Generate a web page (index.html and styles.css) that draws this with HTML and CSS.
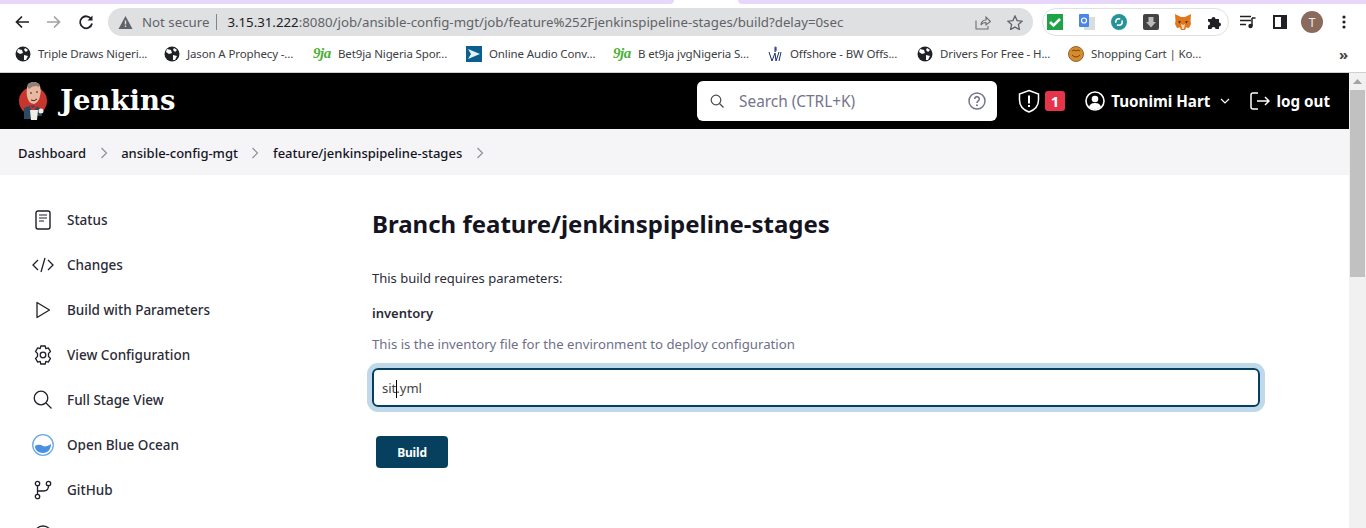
FILE: index.html
```html
<!DOCTYPE html>
<html lang="en">
<head>
<meta charset="UTF-8">
<meta name="viewport" content="width=device-width, initial-scale=1.0">
<title>Jenkins - Build feature/jenkinspipeline-stages</title>
<link rel="stylesheet" href="styles.css">
</head>
<body>

<!-- browser chrome -->
<div class="tabstrip"><div class="tabstrip-left"></div><div class="tabstrip-right"></div></div>

<div class="toolbar">
    <div class="nav-buttons">
        <svg width="16" height="16" viewBox="0 0 16 16"><path d="M15 8H2.500M8 2.500L2.500 8 8 13.500" fill="none" stroke="#202124" stroke-width="1.700"/></svg>
        <svg width="16" height="16" viewBox="0 0 16 16"><path d="M1 8h12.500M8 2.500L13.500 8 8 13.500" fill="none" stroke="#a0a1a3" stroke-width="1.700"/></svg>
        <svg width="16" height="16" viewBox="0 0 16 16"><path d="M13.300 5.200A6 6 0 1 0 14 9.500" fill="none" stroke="#202124" stroke-width="1.800"/><path d="M14.500 1.500v5h-5z" fill="#202124"/></svg>
    </div>
    <div class="omnibox">
        <svg class="warn" width="15" height="13" viewBox="0 0 14 13"><path d="M7 0l7 13H0z" fill="#5f6368"/><path d="M6.300 4.500h1.400v4H6.300zM6.300 9.500h1.400v1.400H6.300z" fill="#dedfe0"/></svg>
        <span class="not-secure">Not secure</span>
        <span class="omni-sep"></span>
        <span class="url"><b>3.15.31.222</b>:8080/job/ansible-config-mgt/job/feature%252Fjenkinspipeline-stages/build?delay=0sec</span>
        <svg class="share" width="16" height="15" viewBox="0 0 16 15"><path d="M1 5.500V14h12v-3M6 10c0-3 2-5 5-5V2l4.500 4.500L11 10V7.500c-2 0-4 .5-5 2.500z" fill="none" stroke="#6a6d70" stroke-width="1.100"/></svg>
        <svg class="star" width="16" height="15" viewBox="0 0 16 15"><path d="M8 1l2.100 4.600 5 .6-3.700 3.400 1 4.900L8 12.100l-4.400 2.400 1-4.900L.9 6.200l5-.6z" fill="none" stroke="#5f6368" stroke-width="1.300"/></svg>
    </div>
    <div class="extensions">
        <svg width="16" height="16" viewBox="0 0 16 16"><rect width="16" height="16" fill="#1ea446"/><path d="M3 8l3.500 3.500L13 5" fill="none" stroke="#fff" stroke-width="2.600"/></svg>
        <svg width="16" height="16" viewBox="0 0 16 16"><rect x="5" y="3" width="11" height="13" fill="#d9dde0"/><rect width="10" height="13" rx="1" fill="#4a86e8"/><circle cx="5" cy="6.500" r="2.500" fill="none" stroke="#fff" stroke-width="1.200"/></svg>
        <svg width="16" height="16" viewBox="0 0 16 16"><circle cx="8" cy="8" r="8" fill="#26929a"/><circle cx="8" cy="8" r="3.200" fill="none" stroke="#fff" stroke-width="1.600" stroke-dasharray="7 2"/></svg>
        <svg width="16" height="16" viewBox="0 0 16 16"><rect width="16" height="16" rx="2" fill="#444"/><path d="M5.500 3h5v5H13l-5 5.500L3 8h2.500z" fill="#bbb"/></svg>
        <svg width="16" height="16" viewBox="0 0 16 16"><path d="M0 0l6 3h4l6-3-.500 7 .500 3-2 4-3-.5-1 2.500H6l-1-2.500-3 .5-2-4 .500-3z" fill="#e2761b"/><path d="M6 10l2 1 2-1-1 5H7z" fill="#f6d7b8"/><path d="M3 7l3 .5-1.500 2zM13 7l-3 .5 1.500 2z" fill="#233447"/></svg>
        <svg width="16" height="16" viewBox="0 0 16 16"><path d="M1 5h3.500a2 2 0 1 1 4 0H12v3.500a2 2 0 1 1 0 4V15H8.500a2 2 0 1 0-4 0H1v-3.500a2 2 0 1 0 0-4z" fill="#202124"/></svg>
    </div>
    <div class="toolbar-right">
        <svg width="16" height="14" viewBox="0 0 16 14"><path d="M0 1.500h11M0 5.500h11M0 9.500h6" stroke="#202124" stroke-width="1.400"/><path d="M12 3v8" stroke="#202124" stroke-width="1.500"/><path d="M12 3h3.500" stroke="#202124" stroke-width="1.500"/><circle cx="10.500" cy="11" r="2.200" fill="#202124"/></svg>
        <svg class="side-toggle" width="14" height="14" viewBox="0 0 14 14"><path d="M0 0h14v14H0zM2 2v10h6V2z" fill="#202124" fill-rule="evenodd"/></svg>
        <span class="avatar">T</span>
        <svg width="4" height="14" viewBox="0 0 4 14"><circle cx="2" cy="2" r="1.600" fill="#202124"/><circle cx="2" cy="7" r="1.600" fill="#202124"/><circle cx="2" cy="12" r="1.600" fill="#202124"/></svg>
    </div>
</div>

<div class="bookmarks">
    <a class="bookmark bm-149"><svg width="16" height="16" viewBox="0 0 16 16"><use href="#globe"/></svg>Triple Draws Nigeri...</a>
    <a class="bookmark bm-149"><svg width="16" height="16" viewBox="0 0 16 16"><use href="#globe"/></svg>Jason A Prophecy -...</a>
    <a class="bookmark bm-153"><span class="ninja">9ja</span>Bet9ja Nigeria Spor...</a>
    <a class="bookmark bm-147"><svg width="16" height="16" viewBox="0 0 16 16"><rect width="16" height="16" fill="#0b5f8e"/><path d="M2 3l12 5-12 5 3-5z" fill="#e6f1f7"/></svg>Online Audio Conv...</a>
    <a class="bookmark bm-154"><span class="ninja">9ja</span>B et9ja jvgNigeria S...</a>
    <a class="bookmark bm-150"><svg width="16" height="16" viewBox="0 0 16 16"><path d="M2 6l3 9 3-8 1 8 3-9M14 6l-2 9M8 1v5M8 1c2 0 2 2 0 2c2 0 2 2 0 2" fill="none" stroke="#1c2f72" stroke-width="1"/></svg>Offshore - BW Offs...</a>
    <a class="bookmark bm-151"><svg width="16" height="16" viewBox="0 0 16 16"><use href="#globe"/></svg>Drivers For Free - H...</a>
    <a class="bookmark"><svg width="16" height="16" viewBox="0 0 16 16"><circle cx="8" cy="8" r="7.500" fill="#d98a2b" stroke="#8a6a3a"/><path d="M4 5q2-2 4 0M8 5q2-2 4 0M4 9q4 4 8 0" fill="none" stroke="#6b4a1c"/></svg>Shopping Cart | Ko...</a>
    <span class="more">&raquo;</span>
</div>

<svg class="defs" width="0" height="0">
    <symbol id="globe" viewBox="0 0 16 16">
        <circle cx="8" cy="8" r="7.500" fill="#202124"/>
        <path d="M3 3l4 1 1 3-3 1-3-2zM9 9l4 1-2 4-2 0zM10 2l3 2-2 2-2-2z" fill="#fff"/>
    </symbol>
</svg>

<!-- page -->
<div class="window">
    <div class="page">
        <header class="jenkins-header">
            <a class="brand">
                <svg width="32" height="40" viewBox="0 0 32 40">
                    <circle cx="15" cy="20" r="14" fill="#c8352c"/>
                    <path d="M6 27q8-5 16 0l2 8H15l-2 3H6z" fill="#2d4a63"/>
                    <path d="M10 3q6-4 11 0q3 5 1 12q-1 6-6 8q-6-1-7-8q-1-6 1-12z" fill="#e8b9a0"/>
                    <path d="M10 3q6-4 11 0q1 2 0 3q-5-3-10 2q-2-1-1-5z" fill="#8f8079"/>
                    <path d="M11 24l4 3 4-3-3 6h-2z" fill="#d0312d"/>
                    <path d="M12 29h8l-1 10h-6z" fill="#f0ede6"/>
                    <circle cx="23" cy="30" r="2.500" fill="#f0ede6"/>
                    <path d="M12 12h2M18 11h2M13 19q3 2 6-1" stroke="#3a2a24" stroke-width="1" fill="none"/>
                </svg>
                <span class="brand-name">Jenkins</span>
            </a>
            <div class="search-box">
                <svg width="14" height="14" viewBox="0 0 14 14"><circle cx="6" cy="6" r="4.800" fill="none" stroke="#4a4a55" stroke-width="1.200"/><path d="M9.500 9.500L13.500 13.500" stroke="#4a4a55" stroke-width="1.200"/></svg>
                <span class="search-text">Search (CTRL+K)</span>
                <svg width="18" height="18" viewBox="0 0 18 18"><circle cx="9" cy="9" r="8" fill="none" stroke="#74748c" stroke-width="1.500"/><path d="M6.700 7a2.300 2.300 0 1 1 3.600 1.900c-.9.600-1.300 1-1.300 2" fill="none" stroke="#74748c" stroke-width="1.600"/><circle cx="9" cy="13.200" r="1" fill="#74748c"/></svg>
            </div>
            <div class="header-actions">
                <a class="alert">
                    <svg width="22" height="24" viewBox="0 0 22 24"><path d="M11 1.500l9.500 3.500v6c0 6-4 10-9.500 12C5.500 21 1.500 17 1.500 11V5z" fill="none" stroke="#fff" stroke-width="1.500"/><path d="M10 6.500h2v8h-2zM10 16h2v2h-2z" fill="#fff"/></svg>
                    <span class="badge">1</span>
                </a>
                <a class="user">
                    <svg width="20" height="20" viewBox="0 0 20 20"><circle cx="10" cy="10" r="9" fill="none" stroke="#fff" stroke-width="1.600"/><circle cx="10" cy="8" r="3.300" fill="#fff"/><path d="M4 16c1-3.500 3.500-4 6-4s5 .5 6 4c-3 3-9 3-12 0z" fill="#fff"/></svg>
                    <span>Tuonimi Hart</span>
                    <svg class="caret" width="10" height="6" viewBox="0 0 10 6"><path d="M1 1l4 4 4-4" fill="none" stroke="#fff" stroke-width="1.200"/></svg>
                </a>
                <a class="logout">
                    <svg width="20" height="18" viewBox="0 0 20 18"><path d="M8 1H3a2 2 0 0 0-2 2v12a2 2 0 0 0 2 2h5M7 9h12M15 5l4 4-4 4" fill="none" stroke="#fff" stroke-width="1.500"/></svg>
                    <span>log out</span>
                </a>
            </div>
        </header>

        <nav class="breadcrumbs">
            <a>Dashboard</a>
            <svg width="8" height="12" viewBox="0 0 8 12"><path d="M1.500 1l5 5-5 5" fill="none" stroke="#8a8a96" stroke-width="1.100"/></svg>
            <a>ansible-config-mgt</a>
            <svg width="8" height="12" viewBox="0 0 8 12"><path d="M1.500 1l5 5-5 5" fill="none" stroke="#8a8a96" stroke-width="1.100"/></svg>
            <a>feature/jenkinspipeline-stages</a>
            <svg width="8" height="12" viewBox="0 0 8 12"><path d="M1.500 1l5 5-5 5" fill="none" stroke="#8a8a96" stroke-width="1.100"/></svg>
        </nav>

        <div class="main">
            <aside class="side-panel">
                <a class="task"><span class="task-icon"><svg width="18" height="20" viewBox="0 0 18 20"><rect x="2" y="1" width="14" height="18" rx="2" fill="none" stroke="#1f1f2b" stroke-width="1.400"/><path d="M5 5h8M5 8h8M5 11h5" stroke="#1f1f2b" stroke-width="1.200"/></svg></span>Status</a>
                <a class="task"><span class="task-icon"><svg width="22" height="16" viewBox="0 0 22 16"><path d="M6 3L1 8l5 5M16 3l5 5-5 5M13 1L9 15" fill="none" stroke="#1f1f2b" stroke-width="1.300"/></svg></span>Changes</a>
                <a class="task"><span class="task-icon"><svg width="16" height="18" viewBox="0 0 16 18"><path d="M2 1.500l12.500 7.500L2 16.500z" fill="none" stroke="#1f1f2b" stroke-width="1.300" stroke-linejoin="round"/></svg></span>Build with Parameters</a>
                <a class="task"><span class="task-icon"><svg width="20" height="20" viewBox="0 0 20 20"><path d="M7.800 1h4.400l.6 2.600 2.500-.8 2.200 3.800-2 1.900v3l2 1.900-2.200 3.800-2.500-.8-.6 2.600H7.800l-.6-2.600-2.500.8-2.200-3.800 2-1.900v-3l-2-1.900 2.200-3.800 2.500.8z" fill="none" stroke="#1f1f2b" stroke-width="1.300" stroke-linejoin="round"/><circle cx="10" cy="10" r="2.800" fill="none" stroke="#1f1f2b" stroke-width="1.300"/></svg></span>View Configuration</a>
                <a class="task"><span class="task-icon"><svg width="19" height="19" viewBox="0 0 19 19"><circle cx="8" cy="8" r="6.800" fill="none" stroke="#1f1f2b" stroke-width="1.300"/><path d="M13 13l5.500 5.500" stroke="#1f1f2b" stroke-width="1.300"/></svg></span>Full Stage View</a>
                <a class="task"><span class="task-icon"><svg width="22" height="22" viewBox="0 0 22 22"><circle cx="11" cy="11" r="10.300" fill="#fff" stroke="#6aa8e8" stroke-width="1.300"/><path d="M3 12c3-2 6-1 8 0s5 0 8-2c0 5-3 9-8 9s-8-3-8-7z" fill="#4a90e0"/></svg></span>Open Blue Ocean</a>
                <a class="task"><span class="task-icon"><svg width="18" height="20" viewBox="0 0 18 20"><circle cx="3.500" cy="3.500" r="2.200" fill="none" stroke="#1f1f2b" stroke-width="1.300"/><circle cx="3.500" cy="16.500" r="2.200" fill="none" stroke="#1f1f2b" stroke-width="1.300"/><circle cx="14.500" cy="3.500" r="2.200" fill="none" stroke="#1f1f2b" stroke-width="1.300"/><path d="M3.500 5.700v8.600M3.500 11h6c3 0 5-1.500 5-5.300" fill="none" stroke="#1f1f2b" stroke-width="1.300"/></svg></span>GitHub</a>
                <a class="task"><span class="task-icon"><svg width="20" height="20" viewBox="0 0 20 20"><circle cx="10" cy="10" r="9" fill="none" stroke="#1f1f2b" stroke-width="1.300"/></svg></span></a>
            </aside>

            <section class="content">
                <h1>Branch feature/jenkinspipeline-stages</h1>
                <p class="intro">This build requires parameters:</p>
                <div class="param-name">inventory</div>
                <div class="param-desc">This is the inventory file for the environment to deploy configuration</div>
                <div class="text-box"><span>sit</span><span class="cursor"></span><span>.yml</span></div>
                <button class="build-button">Build</button>
            </section>
        </div>
    </div>

    <div class="scrollbar">
        <svg width="9" height="5" viewBox="0 0 9 5"><path d="M4.500 0L9 5H0z" fill="#a3a3a3"/></svg>
        <div class="scroll-thumb"></div>
    </div>
</div>

</body>
</html>
```

FILE: styles.css
```css
* {
    box-sizing: border-box;
}
html, body {
    height: 100%;
}
body {
    margin: 0;
    width: 1366px;
    height: 528px;
    overflow: hidden;
    display: flex;
    flex-direction: column;
    font-family: "Noto Sans", "Open Sans", sans-serif;
    background-color: #fff;
}
svg {
    flex: none;
    display: block;
}
.defs {
    position: absolute;
}

/* browser chrome */
.tabstrip {
    height: 4px;
    flex: none;
    display: flex;
    background-color: #fff;
}
.tabstrip-left {
    width: 674px;
    background-color: #e8d7fb;
    border-bottom-right-radius: 6px;
}
.tabstrip-right {
    flex: 1;
    margin-left: 64px;
    background-color: #e8d7fb;
    border-bottom-left-radius: 6px;
}
.toolbar {
    height: 32px;
    flex: none;
    display: flex;
    align-items: center;
    padding: 4px 20px 0 0;
}
.nav-buttons {
    width: 108px;
    padding: 0 14px;
    display: flex;
    gap: 16px;
}
.omnibox {
    width: 926px;
    height: 28px;
    padding: 0 10px 0 10px;
    display: flex;
    align-items: center;
    background-color: #dfe0e1;
    border-radius: 14px;
    font-size: 13.25px;
    white-space: nowrap;
}
.not-secure {
    margin-left: 9px;
    color: #5f6368;
}
.omni-sep {
    width: 1px;
    height: 16px;
    margin: 0 10px 0 7px;
    background-color: #80868b;
}
.url {
    flex: 1;
    color: #5f6368;
}
.url b {
    font-weight: 400;
    color: #202124;
}
.share {
    margin-right: 16px;
}
.extensions {
    width: 187px;
    height: 28px;
    margin-left: 9px;
    padding: 0 4px;
    display: flex;
    align-items: center;
    gap: 16px;
    border: 1px solid #dfe0e1;
    border-radius: 14px;
}
.toolbar-right {
    flex: 1;
    margin-left: 11px;
    display: flex;
    align-items: center;
}
.side-toggle {
    margin-left: 17px;
}
.avatar {
    width: 22px;
    height: 22px;
    margin: 0 19px 0 14px;
    border-radius: 50%;
    background-color: #8a6a5c;
    color: #eee;
    font-size: 12px;
    display: flex;
    align-items: center;
    justify-content: center;
}
.bookmarks {
    height: 37px;
    flex: none;
    padding: 0 15px 1px;
    display: flex;
    align-items: center;
    font-size: 11.5px;
    letter-spacing: -0.13px;
    color: #3c4043;
    background-color: #fff;
    border-bottom: 1px solid #cfd0d1;
}
.bookmark {
    display: flex;
    align-items: center;
    gap: 7px;
    white-space: nowrap;
}
.bm-147 { width: 147px; }
.bm-149 { width: 149px; }
.bm-150 { width: 150px; }
.bm-151 { width: 151px; }
.bm-153 { width: 153px; }
.bm-154 { width: 154px; }
.ninja {
    width: 18px;
    font-family: "Liberation Serif", serif;
    font-size: 15px;
    letter-spacing: -0.5px;
    font-weight: bold;
    font-style: italic;
    color: #4cae33;
}
.more {
    margin-left: auto;
    margin-right: 3px;
    font-size: 15px;
    font-weight: bold;
    color: #444;
}

/* page */
.window {
    flex: 1;
    min-height: 0;
    display: flex;
}
.page {
    flex: 1;
    min-width: 0;
    display: flex;
    flex-direction: column;
}
.scrollbar {
    width: 17px;
    flex: none;
    background-color: #f1f1f1;
    display: flex;
    flex-direction: column;
    align-items: center;
    padding-top: 6px;
}
.scroll-thumb {
    width: 15px;
    height: 187px;
    margin-top: 6px;
    background-color: #c1c1c1;
}
.jenkins-header {
    height: 56px;
    flex: none;
    display: flex;
    align-items: center;
    padding: 0 19px 0 18px;
    background-color: #000;
    color: #fff;
}
.brand {
    display: flex;
    align-items: center;
    gap: 10px;
    width: 679px;
}
.brand-name {
    margin-top: -2px;
    font-family: "DejaVu Serif", serif;
    font-size: 27.5px;
    font-weight: bold;
}
.search-box {
    width: 300px;
    height: 40px;
    padding: 0 11px 0 13px;
    display: flex;
    align-items: center;
    background-color: #fff;
    border-radius: 6px;
    color: #74748c;
    font-size: 15.4px;
}
.search-text {
    flex: 1;
    margin-left: 15px;
}
.header-actions {
    flex: 1;
    display: flex;
    align-items: center;
    justify-content: space-between;
    margin-left: 21px;
    font-size: 15.2px;
    font-weight: bold;
}
.header-actions a {
    display: flex;
    align-items: center;
}
.badge {
    width: 20px;
    height: 20px;
    margin-left: 5px;
    background-color: #e6344a;
    border-radius: 3px;
    font-size: 15px;
    line-height: 20px;
    text-align: center;
}
.user {
    gap: 6px;
}
.caret {
    margin-left: 4px;
}
.logout {
    gap: 6px;
}
.breadcrumbs {
    height: 46px;
    flex: none;
    display: flex;
    align-items: center;
    gap: 13.5px;
    padding: 1px 0 0 18px;
    background-color: #f5f5f7;
    color: #14141f;
    font-size: 13px;
    font-weight: 500;
}
.main {
    flex: 1;
    min-height: 0;
    display: flex;
    overflow: hidden;
}
.side-panel {
    width: 354px;
    flex: none;
    padding: 22px 0 0 32px;
}
.task {
    height: 45px;
    display: flex;
    align-items: center;
    font-size: 13.5px;
    color: #2b2b38;
    font-weight: 500;
}
.task-icon {
    width: 21px;
    margin-right: 14px;
    display: flex;
    justify-content: center;
}
.content {
    width: 888px;
    margin-left: 18px;
    padding-top: 33px;
    color: #14141f;
}
h1 {
    margin: 0;
    font-size: 24px;
    line-height: 32px;
    font-weight: bold;
}
.intro {
    margin: 28px 0 0;
    font-size: 13px;
    line-height: 20px;
    color: #2b2b38;
}
.param-name {
    margin-top: 15px;
    font-size: 13px;
    line-height: 20px;
    font-weight: 600;
    color: #2b2b38;
}
.param-desc {
    margin-top: 11px;
    font-size: 13.2px;
    line-height: 20px;
    color: #6f6f88;
}
.text-box {
    height: 39px;
    margin-top: 14px;
    padding-left: 8px;
    display: flex;
    align-items: center;
    border: 2px solid #07405f;
    border-radius: 6px;
    box-shadow: 0 0 0 5px #c0d9ea;
    font-size: 13px;
    color: #444;
}
.cursor {
    width: 1px;
    height: 18px;
    margin-top: 3px;
    margin-right: -1px;
    background-color: #000;
}
.build-button {
    display: block;
    width: 72px;
    height: 32px;
    margin: 29px 0 0 4px;
    border: none;
    border-radius: 4px;
    background-color: #07405f;
    color: #fff;
    font-family: inherit;
    font-size: 12px;
    letter-spacing: -0.2px;
    font-weight: bold;
}
```
